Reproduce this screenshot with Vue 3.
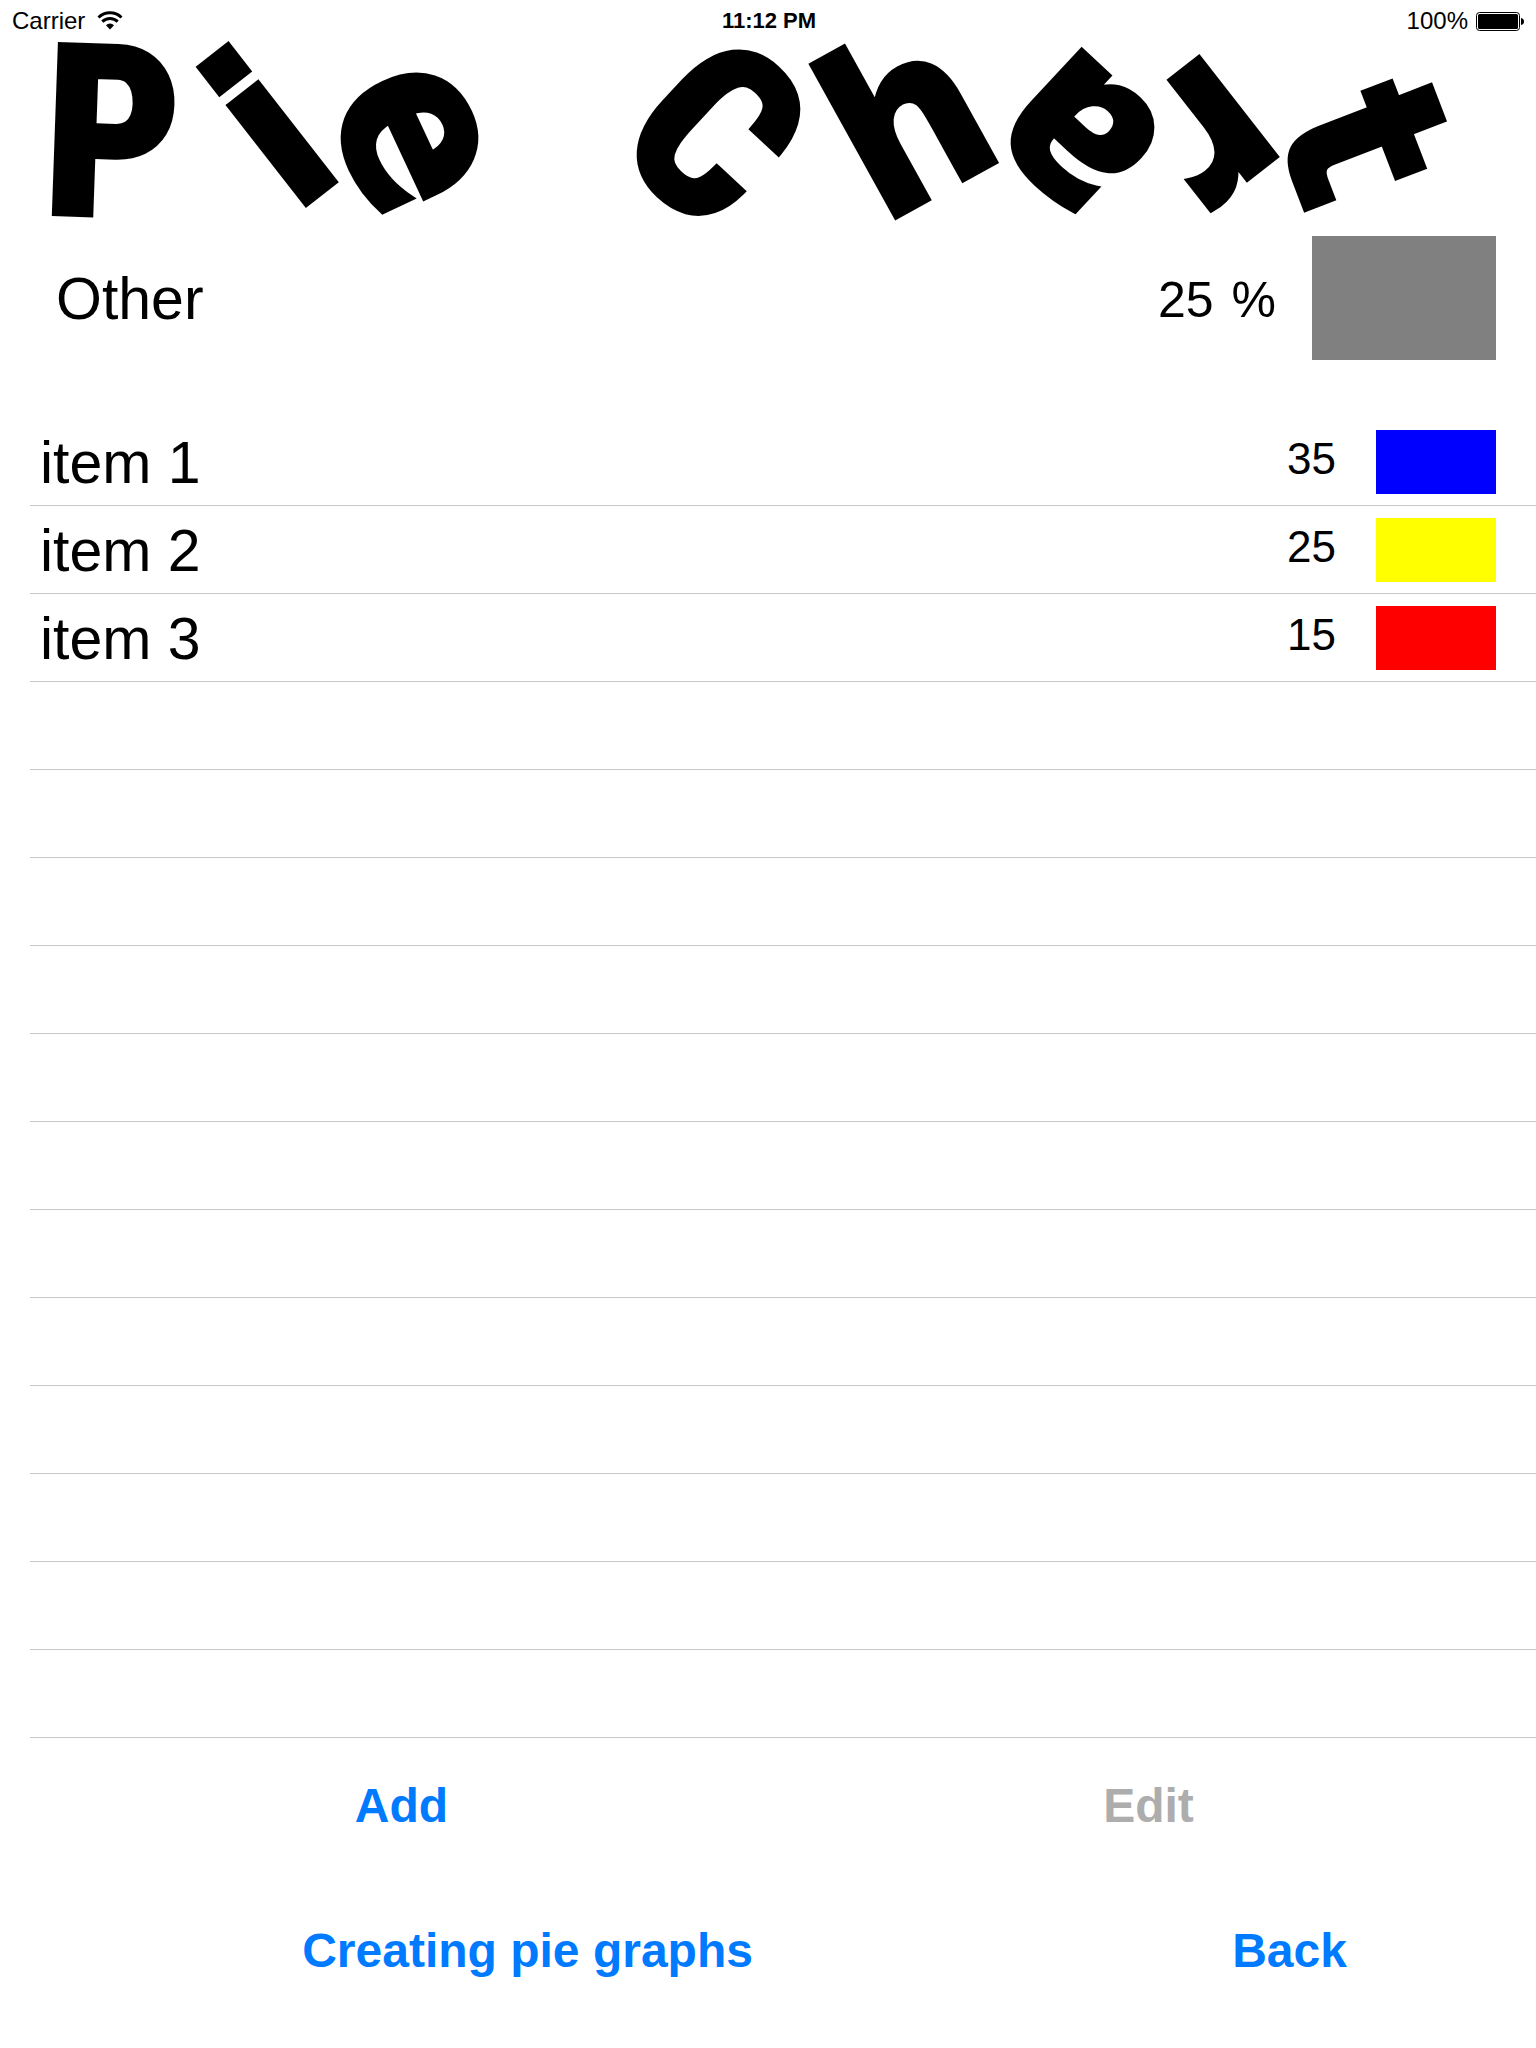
<script setup>
import { ref, computed } from 'vue';

// Letters of the tumbling title: centre, rotation and baseline offset
const letters = [
    { char: 'P', x: 112, y: 130, angle: 2, base: 84, capital: true },
    { char: 'i', x: 268, y: 126, angle: -38, base: 85 },
    { char: 'e', x: 411, y: 138, angle: 65, base: 64 },
    { char: 'C', x: 717, y: 130, angle: 43, base: 84, capital: true },
    { char: 'h', x: 904, y: 115, angle: -29, base: 85 },
    { char: 'a', x: 1077, y: 134, angle: 223, base: 64 },
    { char: 'r', x: 1212, y: 129, angle: 142, base: 64 },
    { char: 't', x: 1362, y: 143, angle: 69, base: 76 },
];

const items = ref([
    { name: 'item 1', value: 35, color: '#0000ff' },
    { name: 'item 2', value: 25, color: '#ffff00' },
    { name: 'item 3', value: 15, color: '#ff0000' },
]);

const rowCount = 15;

const emptyRows = computed(() => Math.max(rowCount - items.value.length, 0));
const other = computed(() => 100 - items.value.reduce((sum, item) => sum + item.value, 0));
</script>

<template>
    <div class="screen">
        <div class="status-bar">
            <div class="status-left">
                <span>Carrier</span>
                <svg class="wifi" viewBox="0 0 26 20" aria-hidden="true">
                    <path d="M1.5 6.5 A16.5 16.5 0 0 1 24.5 6.5" />
                    <path d="M5.3 10.6 A11 11 0 0 1 20.7 10.6" />
                    <path class="wifi-dot" d="M9 14.2 A5.6 5.6 0 0 1 17 14.2 L13 18.6 Z" />
                </svg>
            </div>
            <span class="status-time">11:12 PM</span>
            <div class="status-right">
                <span>100%</span>
                <svg class="battery" viewBox="0 0 50 20" aria-hidden="true">
                    <rect class="battery-case" x="0.5" y="1.5" width="43" height="18" rx="3" />
                    <rect x="2" y="3" width="40" height="15" rx="1.5" />
                    <path d="M45 7 Q48 7.5 48 10.5 Q48 13.5 45 14 Z" />
                </svg>
            </div>
        </div>

        <h1 class="title">
            <svg viewBox="0 40 1536 196" role="img" aria-label="Pie Chart">
                <g
                    v-for="letter in letters"
                    :key="letter.char"
                    :transform="`translate(${letter.x} ${letter.y}) rotate(${letter.angle})`"
                >
                    <text
                        x="0"
                        :y="letter.base"
                        :class="{ capital: letter.capital }"
                        text-anchor="middle"
                    >{{ letter.char }}</text>
                </g>
            </svg>
        </h1>

        <div class="summary">
            <span class="summary-name">Other</span>
            <span class="summary-value">
                <span>{{ other }}</span>
                <span>%</span>
            </span>
            <span class="summary-swatch"></span>
        </div>

        <ul class="items">
            <li v-for="item in items" :key="item.name" class="item">
                <span class="item-name">{{ item.name }}</span>
                <span class="item-value">{{ item.value }}</span>
                <span class="item-swatch" :style="{ background: item.color }"></span>
            </li>
            <li v-for="n in emptyRows" :key="n" class="item" aria-hidden="true"></li>
        </ul>

        <div class="actions">
            <button type="button">Add</button>
            <button type="button" disabled>Edit</button>
        </div>
        <div class="actions nav">
            <button type="button">Creating pie graphs</button>
            <button type="button">Back</button>
        </div>
    </div>
</template>

<style>
body {
    margin: 0;
    background: #fff;
}
</style>

<style scoped>
.screen {
    min-height: 100vh;
    box-sizing: border-box;
    font-family: "Liberation Sans", Arial, sans-serif;
    color: #000;
}

.status-bar {
    display: grid;
    grid-template-columns: 1fr auto 1fr;
    align-items: center;
    height: 40px;
    padding: 2px 10px 0 12px;
    box-sizing: border-box;
    font-size: 24px;
    line-height: 24px;
}

.status-left,
.status-right {
    display: flex;
    align-items: center;
}

.status-left {
    gap: 12px;
}

.status-right {
    justify-content: flex-end;
    gap: 8px;
}

.status-time {
    font-size: 22px;
    font-weight: bold;
}

.wifi {
    width: 26px;
    height: 20px;
    fill: none;
    stroke: #000;
    stroke-width: 3;
}

.wifi-dot {
    fill: #000;
    stroke: none;
}

.battery {
    width: 50px;
    height: 20px;
}

.battery-case {
    fill: #fff;
    stroke: #000;
    stroke-width: 1;
}

.title {
    margin: 0;
}

.title svg {
    display: block;
    width: 100%;
    overflow: visible;
}

.title text {
    font-family: "DejaVu Sans Condensed", "DejaVu Sans", sans-serif;
    font-size: 228px;
    font-weight: bold;
    stroke: #000;
    stroke-width: 6;
}

.title .capital {
    font-family: "Roboto Condensed", "DejaVu Sans Condensed", sans-serif;
    font-size: 234px;
    stroke-width: 8;
}

.summary {
    display: flex;
    align-items: center;
    padding: 0 40px 0 56px;
    margin-bottom: 58px;
}

.summary-name {
    flex: 1;
    padding-top: 2px;
    font-size: 59px;
}

.summary-value {
    display: flex;
    gap: 18px;
    margin-right: 36px;
    padding-top: 4px;
    font-size: 50px;
}

.summary-swatch {
    width: 184px;
    height: 124px;
    background: #808080;
}

.items {
    list-style: none;
    margin: 0;
    padding: 0 0 0 30px;
}

.item {
    display: flex;
    align-items: center;
    height: 88px;
    padding: 0 40px 0 10px;
    box-sizing: border-box;
    border-bottom: 1px solid #c8c7cc;
}

.item-name {
    flex: 1;
    padding-top: 2px;
    font-size: 59px;
    line-height: 64px;
}

.item-value {
    margin-right: 40px;
    padding-bottom: 6px;
    font-size: 44px;
    line-height: 58px;
}

.item-swatch {
    width: 120px;
    height: 64px;
}

.actions {
    display: grid;
    grid-template-columns: 1fr 1fr;
    justify-items: center;
    padding: 40px 14px 0 28px;
}

.actions.nav {
    grid-template-columns: 9fr 4fr;
    padding: 89px 12px 40px 0;
}

button {
    padding: 0;
    border: none;
    background: none;
    font-family: inherit;
    font-size: 48px;
    font-weight: bold;
    line-height: 56px;
    color: #007aff;
    cursor: pointer;
}

button:disabled {
    color: #adadad;
    cursor: default;
}
</style>
